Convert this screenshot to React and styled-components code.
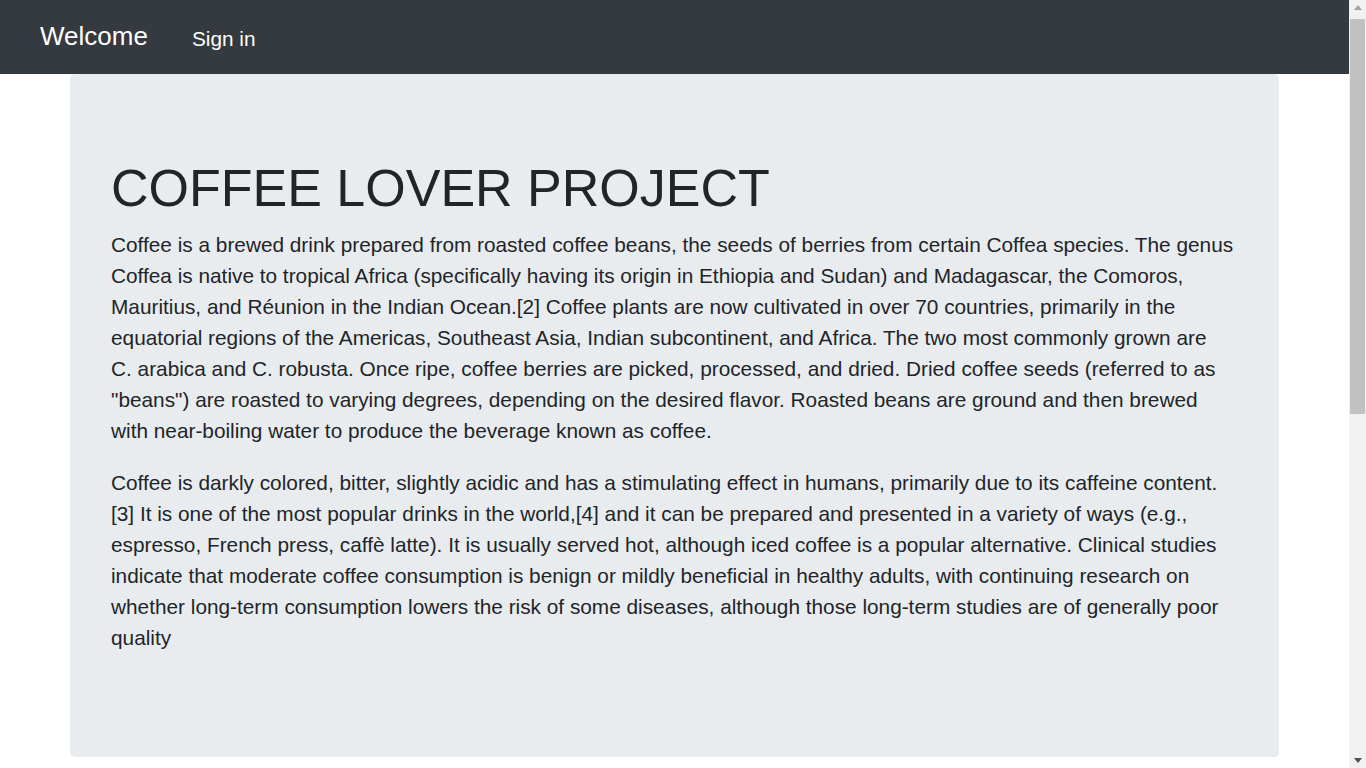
import styled, { createGlobalStyle } from "styled-components";

const GlobalStyle = createGlobalStyle`
  html, body {
    margin: 0;
    padding: 0;
  }
  body {
    font-family: "Liberation Sans", Arial, sans-serif;
    color: #212529;
    background: #fff;
  }
`;

const Page = styled.div`
  min-height: 1430px;
  padding-right: 17px;
`;

const NavBar = styled.nav`
  display: flex;
  align-items: center;
  height: 74px;
  padding: 0 40px;
  background: #343a40;
`;

const Brand = styled.a`
  font-size: 26px;
  color: #fff;
  margin-right: 44px;
  margin-top: -2px;
  text-decoration: none;
`;

const NavLink = styled.a`
  font-size: 20.8px;
  color: #fff;
  margin-top: 4px;
  text-decoration: none;
`;

const Jumbotron = styled.section`
  width: 1209px;
  margin: 0 auto;
  box-sizing: border-box;
  padding: 83px 44px 83px 41px;
  background: #e9ecef;
  border-radius: 5px;
`;

const Title = styled.h1`
  margin: 0 0 10px;
  font-size: 52px;
  font-weight: 400;
  line-height: 1.2;
`;

const Lead = styled.p`
  margin: 0 0 21px;
  font-size: 20.8px;
  line-height: 31px;
`;

/* browser scrollbar as seen in the capture */
const ScrollTrack = styled.div`
  position: fixed;
  top: 0;
  right: 0;
  width: 17px;
  height: 100vh;
  display: flex;
  flex-direction: column;
  align-items: center;
  background: #f1f1f1;
`;

const ScrollButton = styled.div`
  flex: 0 0 17px;
  display: flex;
  align-items: center;
  justify-content: center;
  &::before {
    content: "";
    border-left: 4px solid transparent;
    border-right: 4px solid transparent;
    ${({ $down }) =>
      $down
        ? "border-top: 5px solid #505050; margin-top: 2px;"
        : "border-bottom: 5px solid #a3a3a3; margin-bottom: 2px;"}
  }
`;

const ScrollThumb = styled.div`
  width: 15px;
  height: 395px;
  margin-top: 2px;
  background: #c1c1c1;
`;

const Spacer = styled.div`
  flex: 1;
`;

const PARAGRAPHS = [
  `Coffee is a brewed drink prepared from roasted coffee beans, the seeds of berries from certain Coffea species. The genus Coffea is native to tropical Africa (specifically having its origin in Ethiopia and Sudan) and Madagascar, the Comoros, Mauritius, and Réunion in the Indian Ocean.[2] Coffee plants are now cultivated in over 70 countries, primarily in the equatorial regions of the Americas, Southeast Asia, Indian subcontinent, and Africa. The two most commonly grown are C.\u00a0arabica and C. robusta. Once ripe, coffee berries are picked, processed, and dried. Dried coffee seeds (referred to as "beans") are roasted to varying degrees, depending on the desired flavor. Roasted beans are ground and then brewed with near-boiling water to produce the beverage known as coffee.`,
  `Coffee is darkly colored, bitter, slightly acidic and has a stimulating effect in humans, primarily due to its caffeine content.[3] It is one of the most popular drinks in the world,[4] and it can be prepared and presented in a variety of ways (e.g., espresso, French press, caffè latte). It is usually served hot, although iced coffee is a popular alternative. Clinical studies indicate that moderate coffee consumption is benign or mildly beneficial in healthy adults, with continuing research on whether long-term consumption lowers the risk of some diseases, although those long-term studies are of generally poor quality`,
];

const App = () => {
  return (
    <Page>
      <GlobalStyle />
      <NavBar>
        <Brand href="#">Welcome</Brand>
        <NavLink href="#">Sign in</NavLink>
      </NavBar>
      <Jumbotron>
        <Title>COFFEE LOVER PROJECT</Title>
        {PARAGRAPHS.map((text, i) => (
          <Lead key={i}>{text}</Lead>
        ))}
      </Jumbotron>
      <ScrollTrack>
        <ScrollButton />
        <ScrollThumb />
        <Spacer />
        <ScrollButton $down />
      </ScrollTrack>
    </Page>
  );
};

export default App;
